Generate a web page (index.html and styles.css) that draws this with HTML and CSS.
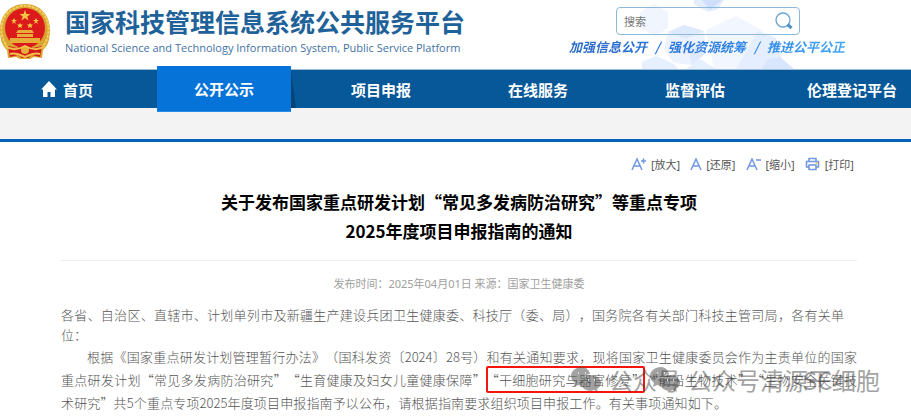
FILE: index.html
```html
<!DOCTYPE html>
<html lang="zh-CN">
<head>
    <meta charset="UTF-8">
    <meta name="viewport" content="width=device-width, initial-scale=1.0">
    <title>国家科技管理信息系统公共服务平台</title>
    <link rel="stylesheet" href="styles.css">
</head>
<body>
    <header class="header">
        <svg class="header-bg" viewBox="0 0 180 69" aria-hidden="true">
            <path fill="#e3edfd" d="M54 0h30l-6 9-10 3-14-8z"/>
            <path fill="#cfdffb" d="M62 0h20l-12 10z"/>
            <path fill="#f0f5fe" d="M0 12l14-8 14 8v16l-12 8L0 28z"/>
            <path fill="#edf3fe" d="M28 32l16-7 20 6 2 22-14 12-18-2-10-14z"/>
            <path fill="#dfe9fd" d="M44 25l20 6-18 8-18-7zM46 39l20 14-14 12z"/>
            <path fill="#f1f6ff" d="M66 30l30-14 26 14v24L96 69H74z"/>
            <path fill="#e4eefe" d="M118 31l18 7 6 22 10 9H96z"/>
            <path fill="#d8e6fd" d="M128 59l12-2 14 12h-32z"/>
            <path fill="#e6effe" d="M2 62l14-6 18 8 4 5H2zM46 69l14-10 16 10z"/>
        </svg>
        <a class="brand" href="#">
            <svg class="emblem" viewBox="0 0 50 56" aria-hidden="true">
                <path fill="#d9a531" d="M25 0C10 0 0 11 0 26c0 9 2 16 7 20l1 8 8-1 4 2h10l4-2 8 1 1-8c5-4 7-11 7-20C50 11 40 0 25 0z"/>
                <path fill="none" stroke="#f4cf60" stroke-width="2" stroke-dasharray="3 1" d="M8 44C-2 31 0 14 10 7s20-7 30 0 12 24 2 37"/>
                <circle cx="25" cy="24" r="20" fill="#dc1a1c"/>
                <path fill="#f3c744" d="M25 6l1.500 4h4l-3.200 2.500 1.200 4L25 14l-3.500 2.500 1.200-4L19.500 10h4zM14 14l1 2h2l-2 1.500.8 2.500-1.800-1.500-2 1.500 1-2.500-2-1.500h2zM36 14l1 2h2l-2 1.500.8 2.500-1.800-1.500-2 1.500 1-2.500-2-1.500h2zM20 19l1 1.500h2L21.500 22l.5 2-2-1-2 1 .5-2-1.500-1.500h2zM30 19l1 1.500h2L31.500 22l.5 2-2-1-2 1 .5-2-1.500-1.500h2z"/>
                <path fill="#e6ae38" d="M18 26h14l2 3H16zM17 30h16v3H17zM10 34h30v5H10z"/>
                <path fill="#d3171a" d="M8 42l9 2 8-3 8 3 9-2-2 11-8-2-4 3h-6l-4-3-8 2z"/>
                <circle cx="25" cy="46" r="4" fill="#e6ae38"/>
                <path fill="none" stroke="#f0c24a" stroke-width="2" d="M5 42c7 5 13 4 20 0 7 4 13 5 20 0M10 50c6-2 10 1 15 3 5-2 9-5 15-3"/>
            </svg>
            <span class="brand-text">
                <span class="brand-name">国家科技管理信息系统公共服务平台</span>
                <span class="brand-en">National Science and Technology Information System, Public Service Platform</span>
            </span>
        </a>
        <div class="header-side">
            <form class="search">
                <input type="text" placeholder="搜索" aria-label="搜索">
                <button type="button" aria-label="搜索">
                    <svg viewBox="0 0 18 18" aria-hidden="true">
                        <circle cx="8" cy="8" r="7" fill="none" stroke="#69a3cf" stroke-width="1.300"/>
                        <path stroke="#4f93c6" stroke-width="3" d="M12.500 12.500l4 3.500"/>
                    </svg>
                </button>
            </form>
            <p class="slogan"><span>加强信息公开</span><span>/</span><span>强化资源统筹</span><span>/</span><span>推进公平公正</span></p>
        </div>
    </header>

    <nav class="nav">
        <a href="#">
            <svg class="home" viewBox="0 0 16 16" aria-hidden="true"><path fill="#fff" d="M8 0l8 8.500h-2V16H9.500v-5h-3v5H2V8.500H0z"/></svg>
            首页
        </a>
        <a class="active" href="#">公开公示</a>
        <a href="#">项目申报</a>
        <a href="#">在线服务</a>
        <a href="#">监督评估</a>
        <a href="#">伦理登记平台</a>
    </nav>
    <div class="subnav"></div>

    <main class="article">
        <div class="tools">
            <button type="button">
                <svg viewBox="0 0 16 14" aria-hidden="true"><path d="M1 13L6 2l5 11M3 9h6M10 4h5M12.500 1.500v5"/></svg>[放大]
            </button>
            <button type="button">
                <svg class="narrow" viewBox="0 0 12 14" aria-hidden="true"><path d="M1 13L6 2l5 11M3 9h6"/></svg>[还原]
            </button>
            <button type="button">
                <svg viewBox="0 0 16 14" aria-hidden="true"><path d="M1 13L6 2l5 11M3 9h6M10 3h5"/></svg>[缩小]
            </button>
            <button type="button">
                <svg viewBox="0 0 16 14" aria-hidden="true"><path d="M4 4V1.500h7V4M3.500 10H1.500V4.500h12V10h-2M4 8h7v4.500H4z"/><path class="dot" d="M10.500 6h2"/></svg>[打印]
            </button>
        </div>

        <h1>关于发布国家重点研发计划“常见多发病防治研究”等重点专项<br>2025年度项目申报指南的通知</h1>
        <p class="meta">发布时间：2025年04月01日 来源：国家卫生健康委</p>

        <div class="content">
            <p class="to">
                <span class="line short">各省、自治区、直辖市、计划单列市及新疆生产建设兵团卫生健康委、科技厅（委、局），国务院各有关部门科技主管司局，各有关单</span>
                <span class="line last">位：</span>
            </p>
            <p>
                <span class="line indent">根据《国家重点研发计划管理暂行办法》（国科发资〔2024〕28号）和有关通知要求，现将国家卫生健康委员会作为主责单位的国家</span>
                <span class="line">重点研发计划“常见多发病防治研究”“生育健康及妇女儿童健康保障”<span class="boxed">“干细胞研究与器官修复”</span>“前沿生物技术”“生物安全关键技</span>
                <span class="line end">术研究”共5个重点专项2025年度项目申报指南予以公布，请根据指南要求组织项目申报工作。有关事项通知如下。</span>
            </p>
            <div class="watermark first">
                <svg viewBox="0 0 30 26" aria-hidden="true"><path d="M11 0C5 0 0 4 0 9c0 3 2 5 4 7l-1 4 4-2 4 1a9 9 0 0 1 8-12C18 3 15 0 11 0z"/><path d="M20 8c-6 0-10 4-10 8s4 8 10 8l3-1 4 2-1-3c3-2 4-4 4-6 0-4-4-8-10-8z"/><path class="eye" d="M7 6h1M14 6h1M17 13h1M23 13h1"/></svg>
                <span>公众号</span>
            </div>
            <div class="watermark second">
                <svg viewBox="0 0 30 26" aria-hidden="true"><path d="M11 0C5 0 0 4 0 9c0 3 2 5 4 7l-1 4 4-2 4 1a9 9 0 0 1 8-12C18 3 15 0 11 0z"/><path d="M20 8c-6 0-10 4-10 8s4 8 10 8l3-1 4 2-1-3c3-2 4-4 4-6 0-4-4-8-10-8z"/><path class="eye" d="M7 6h1M14 6h1M17 13h1M23 13h1"/></svg>
                <span>公众号清源干细胞</span>
            </div>
            <div class="watermark third"><span>SC</span></div>
        </div>
    </main>
</body>
</html>
```

FILE: styles.css
```css
* {
    box-sizing: border-box;
}
body {
    margin: 0;
    background: #fff;
    color: #555;
    font-family: "Noto Sans", "Noto Sans CJK SC", sans-serif;
    font-size: 11px;
    overflow-x: hidden;
}
a {
    color: inherit;
    text-decoration: none;
}
button {
    padding: 0;
    border: 0;
    background: none;
    color: inherit;
    font: inherit;
    cursor: pointer;
}
h1, p {
    margin: 0;
}

/* header */
.header {
    position: relative;
    display: flex;
    justify-content: space-between;
    height: 69px;
    padding-right: 66px;
}
.header-bg {
    position: absolute;
    top: 0;
    right: 91px;
    width: 180px;
    height: 69px;
}
.brand {
    display: flex;
    gap: 15px;
    padding-top: 4px;
}
.emblem {
    width: 50px;
    height: 56px;
}
.brand-text {
    display: flex;
    flex-direction: column;
    color: #1f6199;
    white-space: nowrap;
}
.brand-name {
    font-family: "Noto Sans CJK SC", sans-serif;
    font-size: 25px;
    font-weight: bold;
    line-height: 34px;
}
.brand-en {
    font-family: "Open Sans", sans-serif;
    font-size: 11px;
    line-height: 20px;
    color: #3f73a5;
}
.header-side {
    position: relative;
    padding-top: 7px;
}
.search {
    display: flex;
    align-items: center;
    width: 184px;
    height: 28px;
    margin-left: 47px;
    padding: 0 6px 0 7px;
    border: 1px solid #8db9dc;
    border-radius: 4px;
}
.search input {
    flex: 1;
    min-width: 0;
    padding: 0;
    border: 0;
    outline: none;
    background: none;
    font: inherit;
}
.search input::placeholder {
    color: #777;
}
.search svg {
    display: block;
    width: 18px;
    height: 18px;
}
.slogan {
    display: flex;
    gap: 8px;
    padding-top: 2px;
    font-family: "Noto Sans CJK SC", sans-serif;
    font-size: 13px;
    font-style: italic;
    font-weight: bold;
    line-height: 20px;
    color: transparent;
    background: linear-gradient(90deg, #2a68c8, #2b7be0 50%, #3fa5f5);
    background-clip: text;
    -webkit-background-clip: text;
}

/* navigation */
.nav {
    display: grid;
    grid-template-columns: repeat(6, minmax(134px, 1fr));
    column-gap: 23px;
    height: 39px;
    border-top: 1px solid #a3bfd6;
    background: #075898;
    color: #fff;
    font-size: 15px;
    font-weight: bold;
}
.nav a {
    display: flex;
    align-items: center;
    justify-content: center;
    gap: 6px;
}
.nav .active {
    position: relative;
    margin: -4px 0;
    border-bottom: 1px solid #2a8be6;
    background: #0573d8;
}
.nav .active::after {
    content: "";
    position: absolute;
    top: 4px;
    left: 100%;
    width: 5px;
    height: 38px;
    background: #064576;
    clip-path: polygon(0 0, 100% 100%, 0 100%);
}
.home {
    width: 16px;
    height: 16px;
}
.subnav {
    height: 34px;
    border-bottom: 3px solid #0962ba;
    background: #f3f3f3;
}

/* article */
.article {
    padding: 0 54px 0 61px;
}
.tools {
    display: flex;
    justify-content: flex-end;
    gap: 10px;
    padding: 12px 3px 0 0;
}
.tools button {
    display: flex;
    align-items: center;
    gap: 4px;
    height: 20px;
}
.tools svg {
    width: 16px;
    height: 14px;
    fill: none;
    stroke: #6f97e0;
    stroke-width: 1.500;
}
.tools .narrow {
    width: 12px;
}
.tools .dot {
    stroke: #f0b050;
}
h1 {
    padding: 13px 0 15px;
    border-bottom: 1px solid #eee;
    color: #000;
    font-family: "Noto Sans CJK SC", sans-serif;
    font-size: 17px;
    line-height: 29px;
    text-align: center;
}
.meta {
    padding: 13px 0 11px;
    color: #a0a0a0;
    line-height: 20px;
    text-align: center;
}
.content {
    position: relative;
    font-family: "Noto Sans CJK SC", sans-serif;
    font-size: 13px;
    font-weight: 300;
    line-height: 23px;
    text-spacing-trim: space-all;
}
.to {
    line-height: 20px;
}
.line {
    display: block;
    text-align: justify;
    text-align-last: justify;
    white-space: nowrap;
}
.short {
    padding-right: 13px;
}
.indent {
    padding-left: 26px;
}
.end {
    padding-right: 130px;
}
.last {
    text-align-last: left;
}
.boxed {
    position: relative;
}
.boxed::before {
    content: "";
    position: absolute;
    inset: -4px 0;
    border: 2px solid #f5140c;
    border-radius: 2px;
}

/* watermark over the text */
.watermark {
    position: absolute;
    top: 60px;
    display: flex;
    align-items: center;
    gap: 8px;
    color: rgba(70, 70, 70, 0.5);
    font-size: 24px;
    font-weight: 400;
    line-height: 30px;
    white-space: nowrap;
    pointer-events: none;
}
.first {
    left: 510px;
}
.second {
    left: 589px;
}
.third {
    left: 742px;
}
.watermark svg {
    width: 30px;
    height: 26px;
    fill: rgba(70, 70, 70, 0.5);
}
.watermark .eye {
    stroke: #ddd;
    stroke-width: 2;
}
```
